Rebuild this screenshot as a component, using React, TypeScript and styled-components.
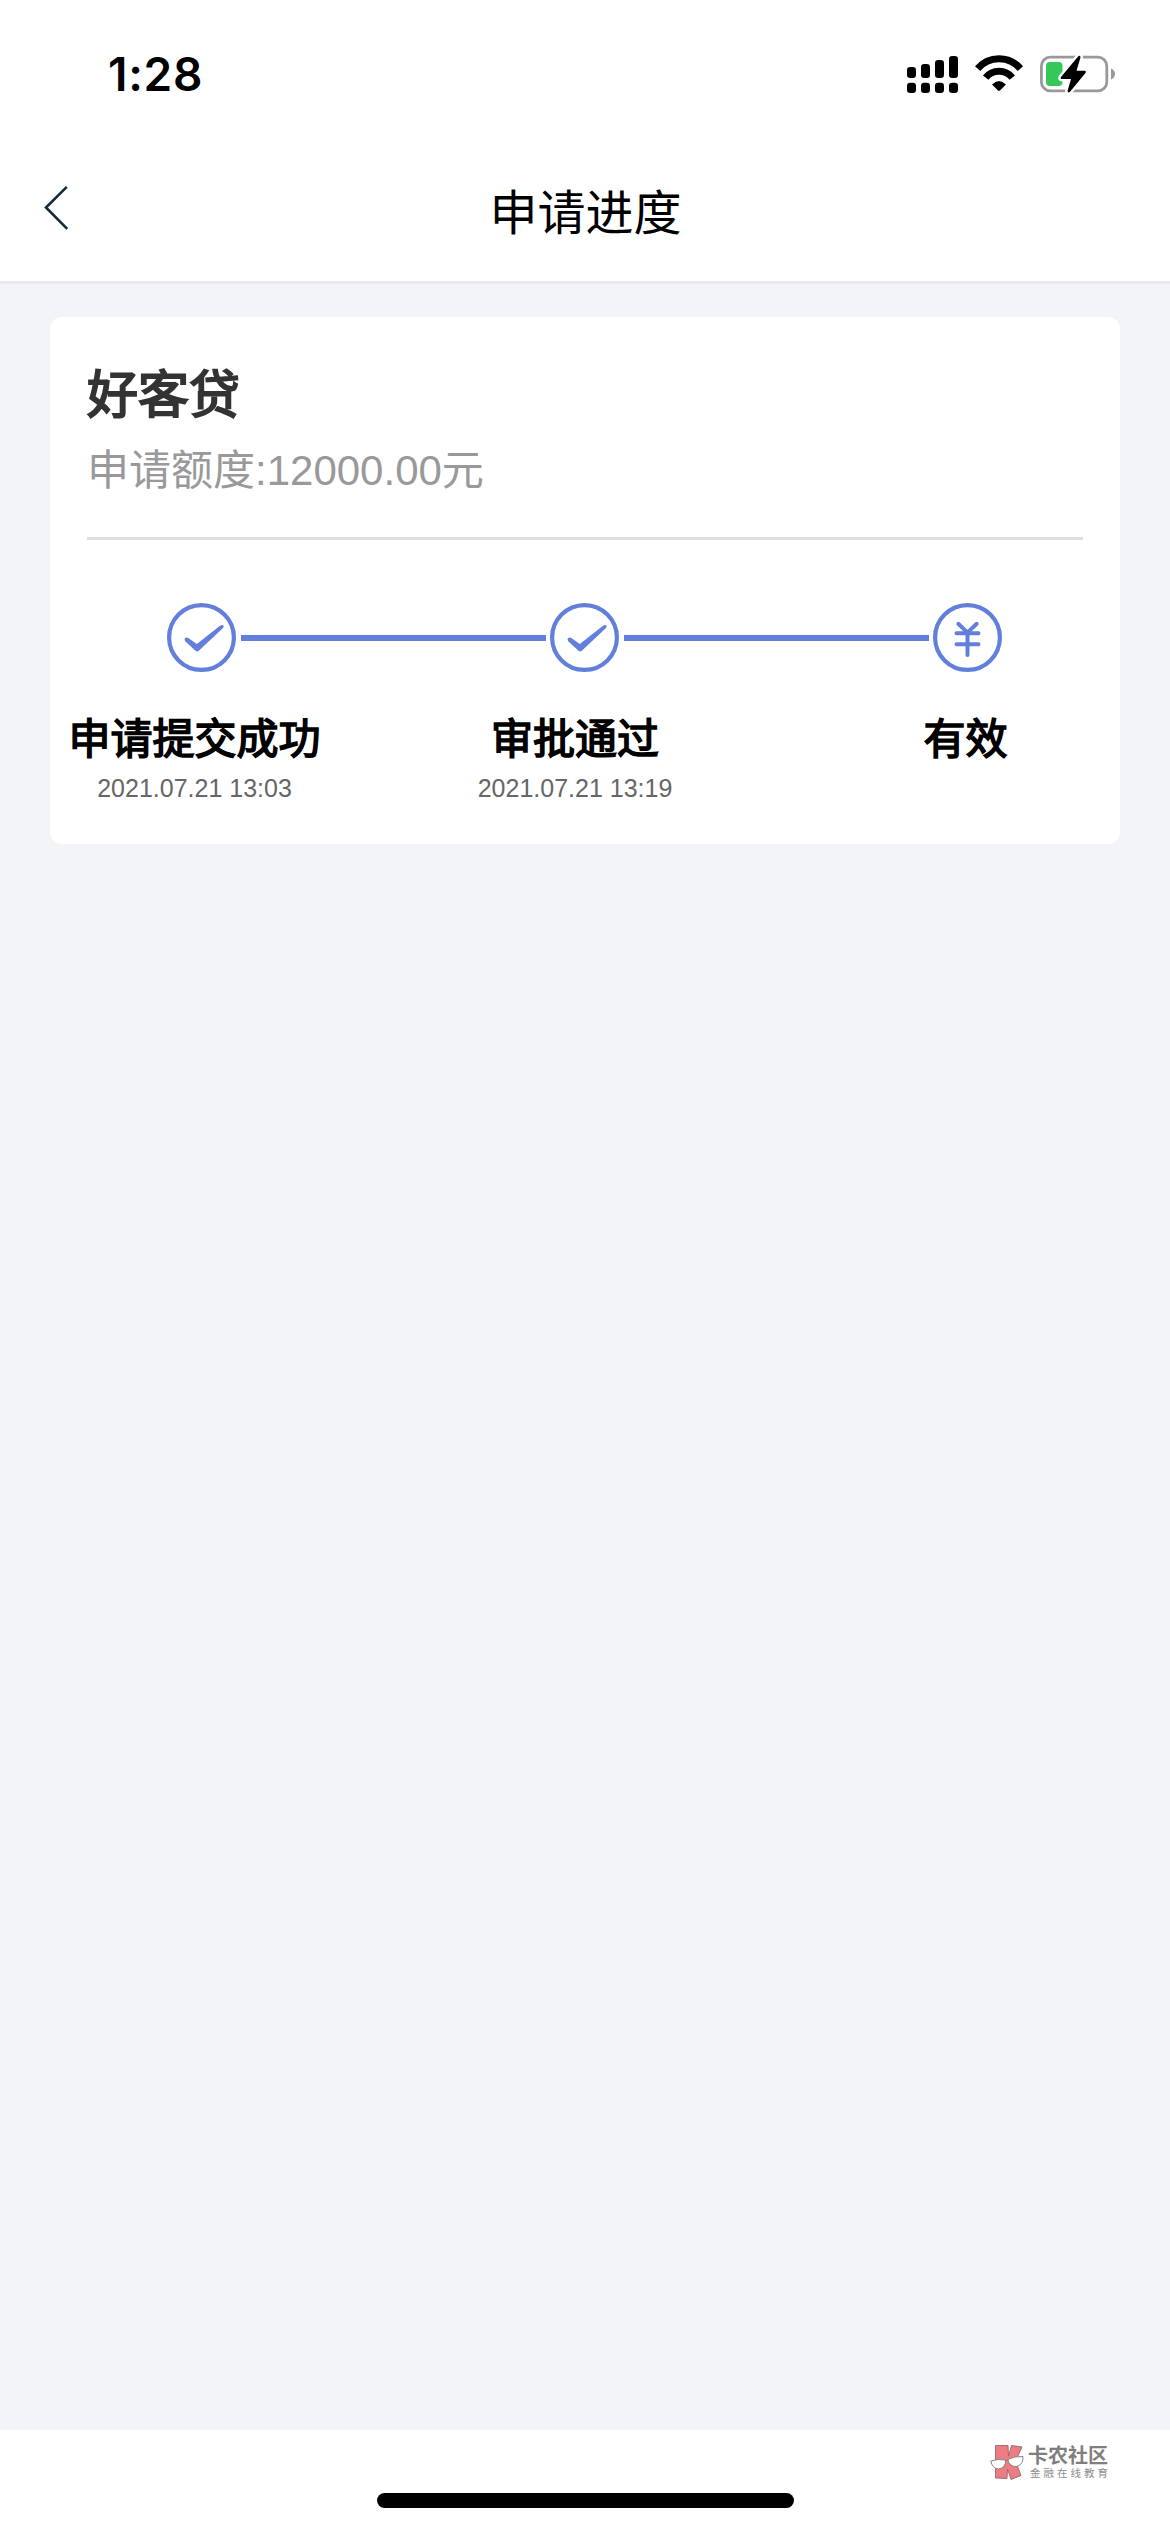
import React from "react";
import styled, { createGlobalStyle } from "styled-components";

const BLUE = "#617fdb";
const CJK = '"Liberation Sans", "Noto Sans CJK SC", sans-serif';

const GlobalStyle = createGlobalStyle`
  body { margin: 0; background: #fff; }
  *, *::before, *::after { box-sizing: border-box; }
`;

const Screen = styled.div`
  width: 1170px;
  height: 2532px;
  display: flex;
  flex-direction: column;
  overflow: hidden;
  background: #fff;
  font-family: ${CJK};
`;

const StatusBar = styled.div`
  height: 150px;
  flex: none;
  display: flex;
  justify-content: space-between;
  align-items: flex-start;
  padding: 49px 54px 0 108px;
`;

const Clock = styled.div`
  font: 600 46px/50px Inter, sans-serif;
  letter-spacing: 0.7px;
  color: #000;
`;

const StatusIcons = styled.div`
  display: flex;
  gap: 16px;
  padding-top: 5px;
`;

const NavBar = styled.header`
  height: 134px;
  flex: none;
  display: grid;
  grid-template-columns: 140px 1fr 140px;
  border-bottom: 3px solid #e9eaec;
`;

const BackButton = styled.button`
  display: flex;
  align-items: flex-start;
  border: 0;
  padding: 35px 0 0 42px;
  background: none;
`;

const Title = styled.h1`
  margin: 0;
  padding: 29px 0 0 1px;
  text-align: center;
  font-weight: 400;
  font-size: 48px;
  line-height: 70px;
  color: #000;
`;

const Content = styled.main`
  flex: 1;
  padding: 33px 50px 0;
  background: #f3f4f8;
`;

const Card = styled.section`
  height: 527px;
  border-radius: 12px;
  background: #fff;
  display: flex;
  flex-direction: column;
`;

const Summary = styled.div`
  height: 223px;
  margin: 0 37px;
  padding-top: 43px;
  border-bottom: 3px solid #dfdfdf;
`;

const Product = styled.h2`
  margin: 0;
  font-weight: 400;
  font-size: 51px;
  line-height: 72px;
  color: #333;
  -webkit-text-stroke: 2px #333;
`;

const Amount = styled.p`
  margin: 0;
  padding-top: 9px;
  font-size: 42px;
  line-height: 60px;
  color: #999;
`;

const Track = styled.div`
  display: flex;
  align-items: center;
  height: 69px;
  margin: 63px 118px 0 117px;
  justify-content: space-between;
`;

const Connector = styled.div`
  width: 305px;
  height: 6px;
  background: ${BLUE};
`;

const Labels = styled.div`
  display: grid;
  grid-template-columns: 289px 472px 309px;
  padding-top: 38px;
`;

const Step = styled.div`
  text-align: center;
`;

const StepName = styled.div`
  font-weight: 400;
  font-size: 42px;
  line-height: 60px;
  color: #000;
  -webkit-text-stroke: 1.6px #000;
`;

const StepTime = styled.div`
  padding-top: 3px;
  font-size: 25px;
  line-height: 30px;
  color: #666;
`;

const BottomBar = styled.footer`
  height: 102px;
  flex: none;
  display: grid;
  grid-template-columns: 377px 417px 1fr;
  background: #fff;
`;

const HomeIndicator = styled.div`
  grid-column: 2;
  height: 15px;
  margin-top: 63px;
  border-radius: 8px;
  background: #000;
`;

const Brand = styled.div`
  display: flex;
  align-items: flex-start;
  padding: 14px 0 0 196px;
`;

const BrandText = styled.div`
  padding: 2px 0 0 4px;
  white-space: nowrap;
`;

const BrandName = styled.div`
  font-size: 20px;
  line-height: 21px;
  font-weight: 700;
  color: #7f7f7f;
`;

const BrandTag = styled.div`
  padding-left: 2px;
  font-size: 10.5px;
  line-height: 12px;
  letter-spacing: 3px;
  color: #8c8c8c;
`;

function Signal() {
  const tops = [13, 10, 6, 2];
  return (
    <svg width="52" height="40" viewBox="0 0 52 40">
      {tops.map((y, i) => (
        <g key={y}>
          <rect x={i * 14} y={y} width="9" height={24 - y} rx="3.2" />
          <rect x={i * 14} y="28.8" width="9" height="10.2" rx="3.2" />
        </g>
      ))}
    </svg>
  );
}

function Wifi() {
  return (
    <svg width="49" height="40" viewBox="0 0 49 40">
      <g fill="none" stroke="#000" strokeWidth="7">
        <path d="M2.6 14.6 A28.2 28.2 0 0 1 45.4 14.6" />
        <path d="M10.7 23.6 A17 17 0 0 1 37.3 23.6" />
      </g>
      <path d="M17 30.5 Q24 23.5 31 30.5 L25 36.6 Q24 37.4 23 36.6 Z" />
    </svg>
  );
}

function Battery() {
  const bolt = "M38.5 2 L21 23 Q20 25 22 25 L31 25 L27.5 37 Q28 39.5 30 37.7 L45.5 19 Q46.5 16.8 44.5 16.8 L36.5 16.8 L40.5 3.6 Q40.5 1 38.5 2 Z";
  return (
    <svg width="76" height="40" viewBox="0 0 76 40">
      <rect x="1.4" y="3.1" width="65.4" height="33.8" rx="9" fill="none" stroke="#999" strokeWidth="2.8" />
      <rect x="6" y="8" width="16.5" height="24" rx="4" fill="#35c759" />
      <path d="M71 14.5 Q75 16 75 20 Q75 24 71 25.5 Z" fill="#999" />
      <path d={bolt} fill="#fff" stroke="#fff" strokeWidth="5" strokeLinejoin="round" />
      <path d={bolt} />
    </svg>
  );
}

function StepIcon({ kind }: { kind: "check" | "yuan" }) {
  return (
    <svg width="69" height="69" viewBox="0 0 69 69">
      <circle cx="34.5" cy="34.5" r="32.4" fill="none" stroke={BLUE} strokeWidth="4.2" />
      {kind === "check" ? (
        <path
          fill={BLUE}
          d="M18.2 38.2 Q16.8 35.7 18.8 34.8 Q20 34.2 21.3 35 L29.8 41 L53.3 22.6 Q55.5 21.3 56.5 22.8 Q57.2 24.2 55.5 25.6 L31.8 47.8 Q30.2 49.4 28.5 47.8 Z"
        />
      ) : (
        <g stroke={BLUE} strokeWidth="4" strokeLinecap="round" fill="none">
          <path d="M25.3 20.8 L34.5 29.6 L43.7 20.8" />
          <path d="M34.5 29.6 V52" />
          <path d="M23.5 30.3 H45.5 M23.5 41.3 H45.5" />
        </g>
      )}
    </svg>
  );
}

function BrandMark() {
  return (
    <svg width="34" height="37" viewBox="0 0 34 37">
      <path
        d="M5.5 1.5 H18 L18.5 12 L21.5 1.5 L32 3 L25.5 17 L31 31.5 L21 35.5 L17.5 25 L17 34.5 L5.5 34 Z"
        fill="#ee7c82"
        stroke="#8b6b6d"
        strokeWidth="0.9"
      />
      <g fill="#fff" stroke="#858585" strokeWidth="1">
        <path d="M.8 17 Q8 14.5 15.5 16 Q16 24 8.5 25 Q2 24 .8 17 Z" />
        <path d="M17.8 15.5 Q24 12 33 12.5 Q33.5 20 27 22.5 Q19.5 23 17.8 15.5 Z" />
        <path d="M15.5 16.5 L18 15.8" />
      </g>
    </svg>
  );
}

const steps = [
  { name: "申请提交成功", time: "2021.07.21 13:03" },
  { name: "审批通过", time: "2021.07.21 13:19" },
  { name: "有效", time: "" },
];

export default function App() {
  return (
    <Screen>
      <GlobalStyle />
      <StatusBar>
        <Clock>1:28</Clock>
        <StatusIcons>
          <Signal />
          <Wifi />
          <Battery />
        </StatusIcons>
      </StatusBar>
      <NavBar>
        <BackButton aria-label="返回">
          <svg width="28" height="46" viewBox="0 0 28 46">
            <path d="M24.8 1.8 L4 22.5 L25.2 43.8" fill="none" stroke="#0f2c3c" strokeWidth="2.6" />
          </svg>
        </BackButton>
        <Title>申请进度</Title>
      </NavBar>
      <Content>
        <Card>
          <Summary>
            <Product>好客贷</Product>
            <Amount>申请额度:12000.00元</Amount>
          </Summary>
          <Track>
            <StepIcon kind="check" />
            <Connector />
            <StepIcon kind="check" />
            <Connector />
            <StepIcon kind="yuan" />
          </Track>
          <Labels>
            {steps.map((s) => (
              <Step key={s.name}>
                <StepName>{s.name}</StepName>
                <StepTime>{s.time}</StepTime>
              </Step>
            ))}
          </Labels>
        </Card>
      </Content>
      <BottomBar>
        <HomeIndicator />
        <Brand>
          <BrandMark />
          <BrandText>
            <BrandName>卡农社区</BrandName>
            <BrandTag>金融在线教育</BrandTag>
          </BrandText>
        </Brand>
      </BottomBar>
    </Screen>
  );
}
